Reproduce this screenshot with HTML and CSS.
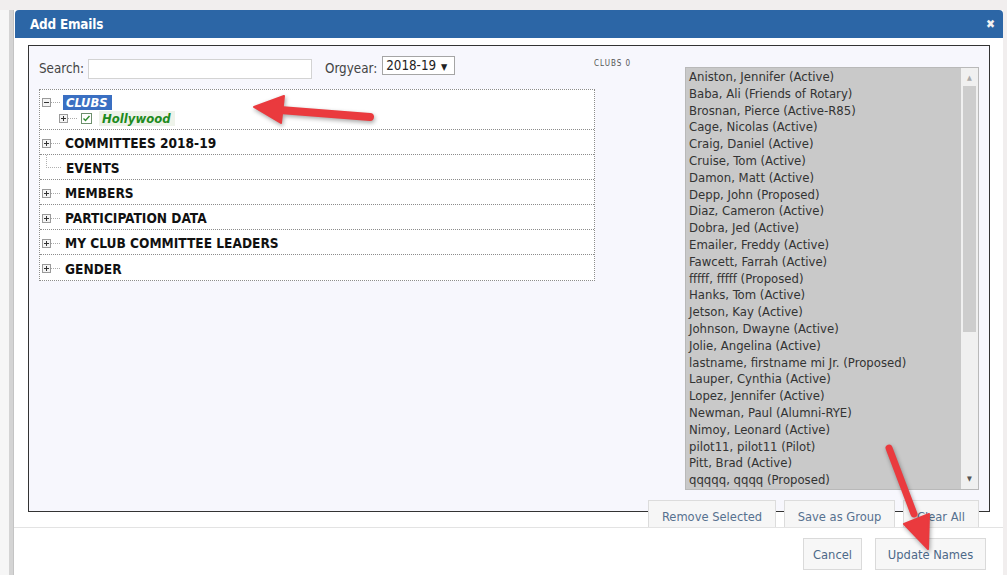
FILE: index.html
```html
<!DOCTYPE html>
<html>
<head>
<meta charset="utf-8">
<title>Add Emails</title>
<link rel="stylesheet" href="styles.css">
</head>
<body>
<div class="page">
  <div class="page-edge"></div>
  <div class="modal">
    <div class="modal-title">
      <span class="title-text">Add Emails</span>
      <span class="close">&#x2716;</span>
    </div>
    <div class="modal-body">
      <div class="panel">
        <div class="left-col">
          <div class="filter-row">
            <label class="lbl search-label">Search:</label>
            <input class="search-input" type="text">
            <label class="lbl org-label">Orgyear:</label>
            <div class="select">2018-19 <span class="caret">&#9660;</span></div>
          </div>
          <div class="tree">
            <div class="tree-row group-row">
              <div class="node-line">
                <svg class="toggle" width="9" height="9" viewBox="0 0 9 9"><rect x="0.5" y="0.5" width="8" height="8" fill="#f4f4f4" stroke="#9a9a9a"/><path d="M2 4.5h5" stroke="#333"/></svg>
                <span class="connector"></span>
                <span class="node-label selected">CLUBS</span>
              </div>
              <div class="node-line child">
                <svg class="toggle" width="9" height="9" viewBox="0 0 9 9"><rect x="0.5" y="0.5" width="8" height="8" fill="#f4f4f4" stroke="#9a9a9a"/><path d="M2 4.5h5M4.5 2v5" stroke="#333"/></svg>
                <span class="connector short"></span>
                <svg class="check" width="11" height="11" viewBox="0 0 11 11"><rect x="0.5" y="0.5" width="10" height="10" fill="#fff" stroke="#6d8f6d"/><path d="M2.5 5.5l2 2 4-4.5" fill="none" stroke="#2e8b2e" stroke-width="1.4"/></svg>
                <span class="node-label club">Hollywood</span>
              </div>
            </div>
            <div class="tree-row">
              <svg class="toggle" width="9" height="9" viewBox="0 0 9 9"><rect x="0.5" y="0.5" width="8" height="8" fill="#f4f4f4" stroke="#9a9a9a"/><path d="M2 4.5h5M4.5 2v5" stroke="#333"/></svg>
              <span class="connector"></span>
              <span class="node-label">COMMITTEES 2018-19</span>
            </div>
            <div class="tree-row leaf">
              <span class="elbow"></span>
              <span class="node-label">EVENTS</span>
            </div>
            <div class="tree-row">
              <svg class="toggle" width="9" height="9" viewBox="0 0 9 9"><rect x="0.5" y="0.5" width="8" height="8" fill="#f4f4f4" stroke="#9a9a9a"/><path d="M2 4.5h5M4.5 2v5" stroke="#333"/></svg>
              <span class="connector"></span>
              <span class="node-label">MEMBERS</span>
            </div>
            <div class="tree-row">
              <svg class="toggle" width="9" height="9" viewBox="0 0 9 9"><rect x="0.5" y="0.5" width="8" height="8" fill="#f4f4f4" stroke="#9a9a9a"/><path d="M2 4.5h5M4.5 2v5" stroke="#333"/></svg>
              <span class="connector"></span>
              <span class="node-label">PARTICIPATION DATA</span>
            </div>
            <div class="tree-row">
              <svg class="toggle" width="9" height="9" viewBox="0 0 9 9"><rect x="0.5" y="0.5" width="8" height="8" fill="#f4f4f4" stroke="#9a9a9a"/><path d="M2 4.5h5M4.5 2v5" stroke="#333"/></svg>
              <span class="connector"></span>
              <span class="node-label">MY CLUB COMMITTEE LEADERS</span>
            </div>
            <div class="tree-row last">
              <svg class="toggle" width="9" height="9" viewBox="0 0 9 9"><rect x="0.5" y="0.5" width="8" height="8" fill="#f4f4f4" stroke="#9a9a9a"/><path d="M2 4.5h5M4.5 2v5" stroke="#333"/></svg>
              <span class="connector"></span>
              <span class="node-label">GENDER</span>
            </div>
          </div>
        </div>
        <div class="count-col">CLUBS 0</div>
        <div class="listbox">
          <div class="list-items">
            <div>Aniston, Jennifer (Active)</div>
            <div>Baba, Ali (Friends of Rotary)</div>
            <div>Brosnan, Pierce (Active-R85)</div>
            <div>Cage, Nicolas (Active)</div>
            <div>Craig, Daniel (Active)</div>
            <div>Cruise, Tom (Active)</div>
            <div>Damon, Matt (Active)</div>
            <div>Depp, John (Proposed)</div>
            <div>Diaz, Cameron (Active)</div>
            <div>Dobra, Jed (Active)</div>
            <div>Emailer, Freddy (Active)</div>
            <div>Fawcett, Farrah (Active)</div>
            <div>fffff, fffff (Proposed)</div>
            <div>Hanks, Tom (Active)</div>
            <div>Jetson, Kay (Active)</div>
            <div>Johnson, Dwayne (Active)</div>
            <div>Jolie, Angelina (Active)</div>
            <div>lastname, firstname mi Jr. (Proposed)</div>
            <div>Lauper, Cynthia (Active)</div>
            <div>Lopez, Jennifer (Active)</div>
            <div>Newman, Paul (Alumni-RYE)</div>
            <div>Nimoy, Leonard (Active)</div>
            <div>pilot11, pilot11 (Pilot)</div>
            <div>Pitt, Brad (Active)</div>
            <div>qqqqq, qqqq (Proposed)</div>
          </div>
          <div class="scrollbar">
            <span class="sb-arrow up">&#9650;</span>
            <div class="sb-track"><div class="sb-thumb"></div></div>
            <span class="sb-arrow down">&#9660;</span>
          </div>
        </div>
      </div>
      <div class="action-row">
        <button class="btn btn-remove">Remove Selected</button>
        <button class="btn btn-group">Save as Group</button>
        <button class="btn btn-clear">Clear All</button>
      </div>
    </div>
    <div class="modal-footer">
      <button class="btn btn-cancel">Cancel</button>
      <button class="btn btn-update">Update Names</button>
    </div>
  </div>
</div>
<svg class="callouts" width="1007" height="575" viewBox="0 0 1007 575">
  <g fill="#ea3a3e" stroke="#ea3a3e" class="callout">
    <path d="M370 117 L280 110" stroke-width="8" stroke-linecap="round" fill="none"/>
    <path d="M254 107 L284 96 L281 123 Z" stroke-width="2" stroke-linejoin="round"/>
  </g>
  <g fill="#ea3a3e" stroke="#ea3a3e" class="callout">
    <path d="M889 448 L914 514" stroke-width="7" stroke-linecap="round" fill="none"/>
    <path d="M928 549 L929 514 L904 524 Z" stroke-width="2" stroke-linejoin="round"/>
  </g>
</svg>
</body>
</html>
```

FILE: styles.css
```css
html, body {
  margin: 0;
  padding: 0;
}

body {
  width: 1007px;
  height: 575px;
  overflow: hidden;
  position: relative;
  background: #f1eeee;
  font-family: "DejaVu Sans Condensed", "DejaVu Sans", sans-serif;
  color: #222;
}

.page {
  display: flex;
  height: 575px;
}

.page-edge {
  width: 9px;
  margin-top: 10px;
  border-right: 4px solid #d4d4d4;
  background: #f6f6f6;
  flex: none;
}

.modal {
  width: 989px;
  margin-top: 10px;
  border-left: 1px solid #c4c4c4;
  background: #fff;
  display: flex;
  flex-direction: column;
  flex: none;
}

.modal-title {
  height: 28px;
  margin-left: 1px;
  padding: 0 8px 0 15px;
  background: #2c66a6;
  border-radius: 4px 4px 0 0;
  display: flex;
  align-items: center;
  justify-content: space-between;
  color: #fff;
}

.title-text {
  font-weight: bold;
  font-size: 13.4px;
  letter-spacing: -0.2px;
}

.close {
  font-size: 12px;
  font-weight: bold;
  color: #f2f2f2;
}

.modal-body {
  padding: 7px 13px 0 14px;
}

.panel {
  height: 465px;
  border: 1px solid #333;
  background: #f7f7fd;
  display: flex;
  padding-left: 10px;
}

.left-col {
  width: 556px;
  flex: none;
}

.filter-row {
  display: flex;
  align-items: center;
  height: 22px;
  margin-top: 11px;
  font-size: 13.3px;
  color: #444;
}

.lbl {
  color: #444;
  flex: none;
}

.search-label {
  width: 49px;
}

.search-input {
  width: 224px;
  height: 20px;
  box-sizing: border-box;
  margin: 0;
  padding: 0;
  border: 1px solid #d3d3d3;
  background: #fff;
  align-self: flex-end;
  flex: none;
}

.org-label {
  margin-left: 13px;
}

.select {
  margin-left: 5px;
  width: 73px;
  height: 19px;
  box-sizing: border-box;
  border: 1px solid #a5a5a5;
  background: #fff;
  font-size: 13.3px;
  color: #222;
  padding-left: 3px;
  line-height: 17px;
  align-self: flex-start;
  margin-top: -1px;
  white-space: nowrap;
  flex: none;
}

.caret {
  font-size: 9px;
  margin-left: 1px;
}

.tree {
  margin-top: 10px;
  border: 1px dotted #8c8c8c;
  background: #fff;
}

.tree-row {
  border-bottom: 1px dotted #8c8c8c;
  display: flex;
  align-items: center;
  padding-left: 2px;
  padding-top: 2px;
  box-sizing: border-box;
  height: 25px;
}

.tree-row.last {
  border-bottom: none;
}

.tree-row.group-row {
  display: block;
  padding-top: 4px;
  box-sizing: content-box;
  height: 35px;
}

.node-line {
  display: flex;
  align-items: center;
  height: 16px;
}

.node-line.child {
  height: 17px;
  padding-left: 17px;
}

.toggle {
  flex: none;
  display: block;
}

.connector {
  width: 9px;
  height: 0;
  border-top: 1px dotted #aaa;
  margin-right: 3px;
  flex: none;
}

.check {
  margin: 0 7px 0 1px;
  flex: none;
}

.node-label {
  font-weight: bold;
  font-size: 13.6px;
  color: #111;
  padding: 0 2px;
}

.node-label.selected {
  background: #3a6fc2;
  color: #fff;
  font-style: italic;
  font-size: 12.8px;
  padding: 0 4px 0 3px;
  line-height: 15px;
}

.node-label.club {
  color: #1e8b1e;
  font-style: italic;
  font-size: 13px;
  background: #eef3ea;
  padding: 0 4px 0 3px;
}

.tree-row.leaf .elbow {
  width: 14px;
  height: 12px;
  margin: -14px 3px 0 4px;
  border-left: 1px dotted #b0b0b0;
  border-bottom: 1px dotted #b0b0b0;
  flex: none;
}

.count-col {
  width: 91px;
  margin-left: -1px;
  padding-top: 13px;
  font-size: 8px;
  letter-spacing: 1px;
  color: #555;
  flex: none;
}

.listbox {
  width: 294px;
  height: 423px;
  margin-top: 21px;
  box-sizing: border-box;
  border: 1px solid #b9b9b9;
  display: flex;
  flex: none;
}

.list-items {
  flex: 1;
  background: #c9c9c9;
  padding: 1px 3px;
  font-size: 13px;
  line-height: 16.8px;
  color: #333;
  white-space: nowrap;
  overflow: hidden;
}

.scrollbar {
  width: 17px;
  background: #f0f0f0;
  display: flex;
  flex-direction: column;
  align-items: center;
  flex: none;
}

.sb-arrow {
  font-size: 7px;
  line-height: 12px;
  height: 12px;
}

.sb-arrow.up {
  color: #a9a9a9;
  margin-top: 4px;
}

.sb-arrow.down {
  color: #555;
  margin-bottom: 4px;
}

.sb-track {
  flex: 1;
  width: 100%;
  padding: 2px 2px 0;
  box-sizing: border-box;
}

.sb-thumb {
  height: 246px;
  background: #cdcdcd;
}

.action-row {
  display: flex;
  justify-content: flex-end;
  gap: 8px;
  padding-right: 11px;
  margin-top: -12px;
  height: 27px;
}

.btn {
  font-family: "DejaVu Sans Condensed", "DejaVu Sans", sans-serif;
  font-size: 12.8px;
  color: #56718f;
  background: #f6f6f6;
  border: 1px solid #dcdcdc;
  padding: 0;
  margin: 0;
}

.action-row .btn {
  height: 27px;
  border-bottom: none;
  padding-top: 4px;
}

.btn-remove { width: 128px; }
.btn-group { width: 111px; }
.btn-clear { width: 76px; }

.modal-footer {
  border-top: 1px solid #e3e3e3;
  display: flex;
  justify-content: flex-end;
  gap: 13px;
  padding: 10px 17px 0 0;
}

.modal-footer .btn {
  height: 32px;
  background: #f7f7f7;
  border-color: #dadada;
  color: #4d6988;
}

.btn-cancel { width: 59px; }
.btn-update { width: 111px; }

.callouts {
  position: absolute;
  left: 0;
  top: 0;
  pointer-events: none;
}

.callout {
  filter: drop-shadow(1px 2px 2px rgba(0, 0, 0, 0.35));
}
```
